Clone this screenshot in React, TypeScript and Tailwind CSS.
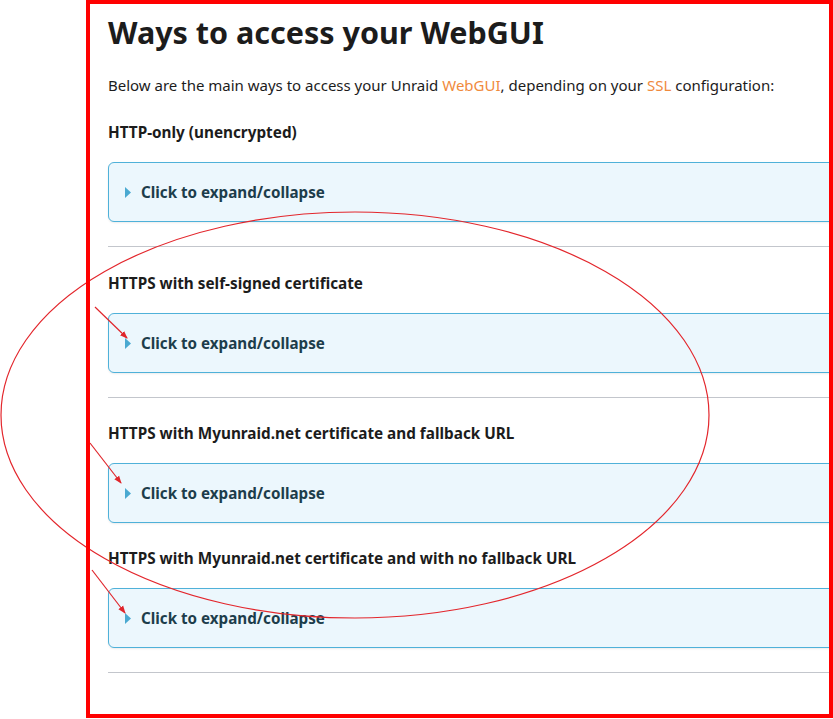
import React from "react";

const sections = [
  "HTTP-only (unencrypted)",
  "HTTPS with self-signed certificate",
  "HTTPS with Myunraid.net certificate and fallback URL",
  "HTTPS with Myunraid.net certificate and with no fallback URL",
];

// Collapsed details box with a small caret
const Collapsible: React.FC = () => (
  <div className="mt-[18px] flex h-[60px] items-center rounded-[6px] border border-[#4fb1d9] bg-[#ecf7fd] pl-[16px] shadow-[0_1px_2px_rgba(0,0,0,0.08)]">
    <svg width="6" height="11" viewBox="0 0 6 11" className="mr-[10px]">
      <path d="M0 0 L6 5.5 L0 11 Z" fill="#4aa9d1" />
    </svg>
    <span className="text-[15.2px] font-bold text-[#1d3d4b]">Click to expand/collapse</span>
  </div>
);

// Red markup drawn on top of the page
const Markup: React.FC = () => (
  <svg className="pointer-events-none absolute inset-0" width="833" height="719" viewBox="0 0 833 719">
    <defs>
      <marker id="tip" markerWidth="8" markerHeight="8" refX="7" refY="4" orient="auto" markerUnits="userSpaceOnUse">
        <path d="M0 1 L8 4 L0 7 Z" fill="#e0252b" />
      </marker>
    </defs>
    <ellipse cx="355" cy="415" rx="354" ry="203" fill="none" stroke="#e3262c" strokeWidth="1.2" />
    <line x1="95" y1="307" x2="127" y2="338" stroke="#e0252b" strokeWidth="1.2" markerEnd="url(#tip)" />
    <line x1="90" y1="443" x2="121" y2="483" stroke="#e0252b" strokeWidth="1.2" markerEnd="url(#tip)" />
    <line x1="92" y1="570" x2="125" y2="613" stroke="#e0252b" strokeWidth="1.2" markerEnd="url(#tip)" />
    <rect x="88" y="2" width="743" height="714" fill="none" stroke="#ff0000" strokeWidth="4" />
  </svg>
);

export default function App() {
  return (
    <div
      className="relative h-[719px] w-[833px] overflow-hidden bg-white text-[#1c1c1c]"
      style={{ fontFamily: '"Noto Sans", "Open Sans", sans-serif' }}
    >
      <div className="w-[900px] pl-[108px] pt-[12px]">
        <h1 className="text-[30.5px] font-bold leading-[40px]">Ways to access your WebGUI</h1>
        <p className="mt-[21px] text-[15px] leading-[24px]">
          Below are the main ways to access your Unraid <span className="text-[#f08a3d]">WebGUI</span>, depending on
          your <span className="text-[#f08a3d]">SSL</span> configuration:
        </p>

        <h3 className="mt-[23px] text-[15.3px] font-bold leading-[24px]">{sections[0]}</h3>
        <Collapsible />
        <hr className="mt-[24px] border-0 border-t border-[#c3c6cc]" />

        <h3 className="mt-[24px] text-[15.3px] font-bold leading-[24px]">{sections[1]}</h3>
        <Collapsible />
        <hr className="mt-[24px] border-0 border-t border-[#c3c6cc]" />

        <h3 className="mt-[23px] text-[15.3px] font-bold leading-[24px]">{sections[2]}</h3>
        <Collapsible />

        <h3 className="mt-[23px] text-[15.3px] font-bold leading-[24px]">{sections[3]}</h3>
        <Collapsible />
        <hr className="mt-[24px] border-0 border-t border-[#c3c6cc]" />
      </div>
      <Markup />
    </div>
  );
}
